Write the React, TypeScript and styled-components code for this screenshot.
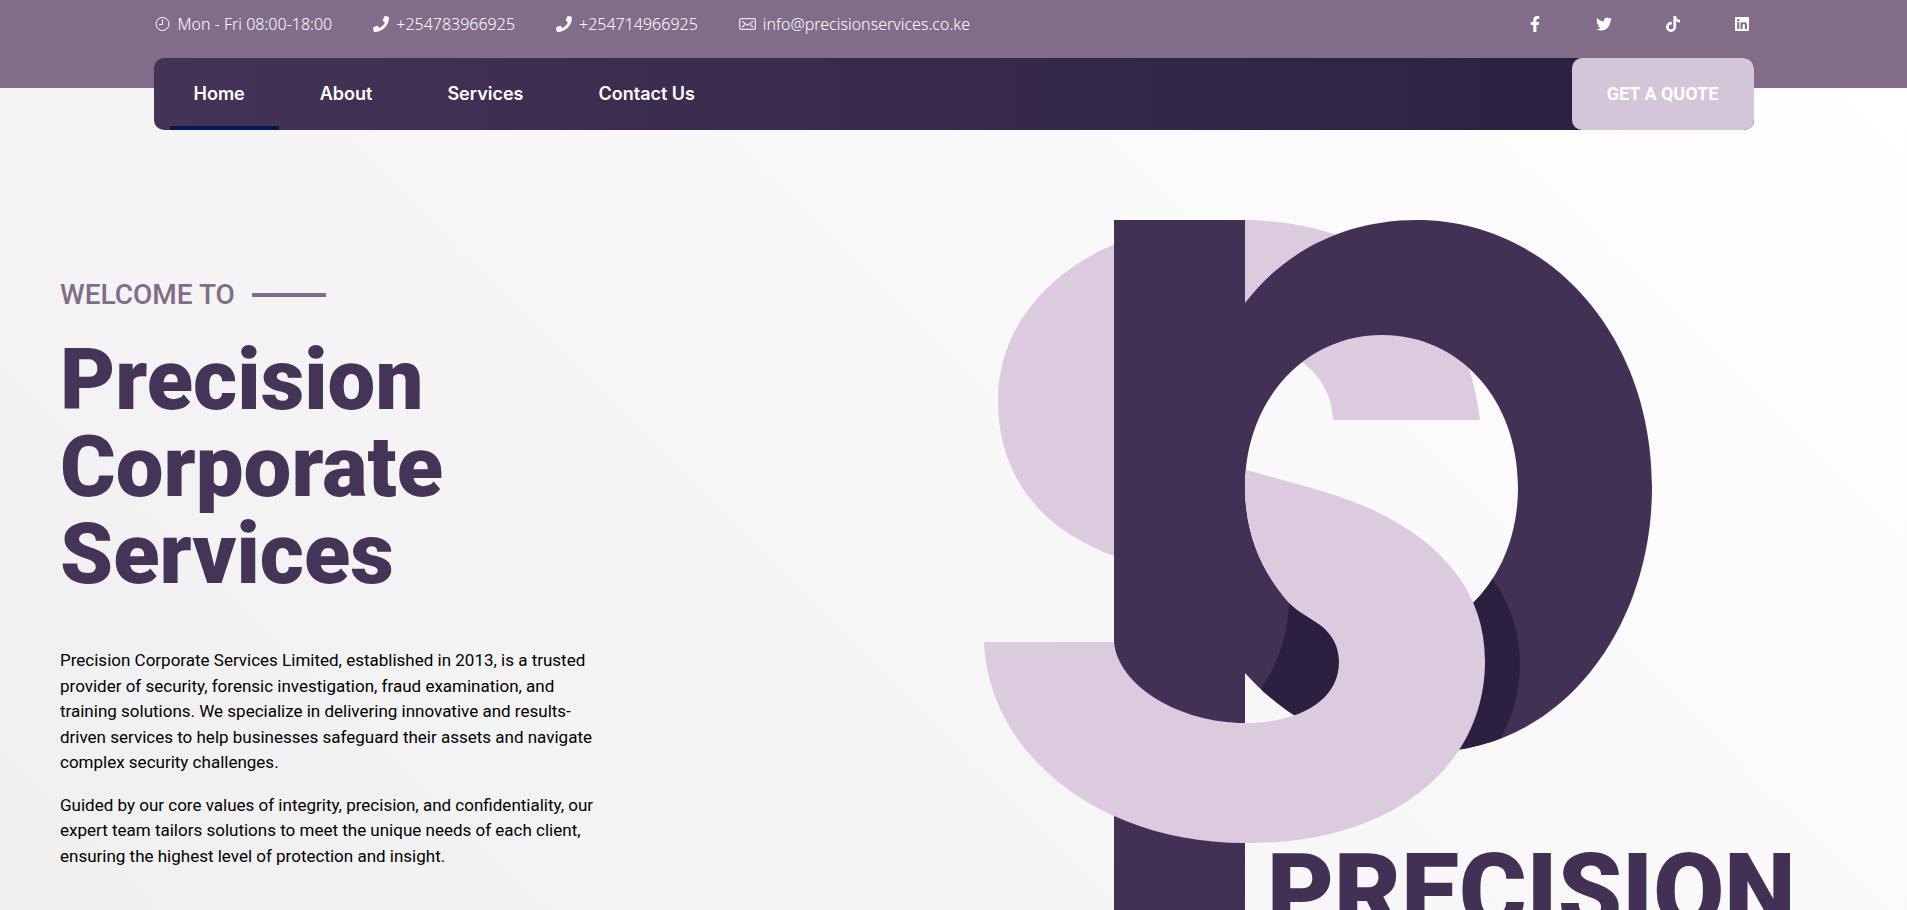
import React from "react";
import styled, { createGlobalStyle } from "styled-components";
import { FaFacebookF, FaLinkedin, FaPhone, FaTiktok, FaTwitter } from "react-icons/fa";

const color = {
  mauve: "#816d89",
  plum: "#433458",
  plumDark: "#2c2240",
  lilac: "#d5c5d8",
  markDark: "#423154",
  markShade: "#2c2040",
  markLight: "#dccadf",
  active: "#00185c",
};

const GlobalStyle = createGlobalStyle`
  *, *::before, *::after { box-sizing: border-box; }
  body {
    margin: 0;
    font-family: Roboto, "Liberation Sans", sans-serif;
    color: #000;
  }
  a { color: inherit; text-decoration: none; }
  h1, h2, p, ul { margin: 0; padding: 0; }
  ul { list-style: none; }
`;

const Page = styled.div`
  display: flex;
  flex-direction: column;
  min-height: 100vh;
`;

const Header = styled.header`
  position: relative;
  z-index: 1;
  height: 88px;
  background: ${color.mauve};
`;

const Container = styled.div`
  max-width: 1600px;
  margin: 0 auto;
`;

const TopRow = styled.div`
  display: flex;
  align-items: center;
  justify-content: space-between;
  height: 58px;
  padding: 0 4px 10px 0;
  color: #fff;
`;

const ContactList = styled.ul`
  display: flex;
  gap: 41px;
`;

const ContactItem = styled.li`
  display: flex;
  align-items: center;
  gap: 7px;
  font: 300 16px/24px "Noto Sans", sans-serif;
`;

const SocialList = styled.ul`
  display: flex;
  gap: 53px;
`;

const SocialLink = styled.a`
  display: flex;
  font-size: 16px;
`;

const NavBar = styled.nav`
  display: flex;
  justify-content: space-between;
  height: 72px;
  border-radius: 10px;
  overflow: hidden;
  background: linear-gradient(90deg, #443357, ${color.plumDark} 90%);
`;

const NavList = styled.ul`
  display: flex;
  gap: 17px;
  padding-left: 16px;
`;

const NavLink = styled.a<{ $active?: boolean }>`
  display: block;
  height: 72px;
  padding: 0 34px 0 24px;
  border-bottom: 4px solid ${(p) => (p.$active ? color.active : "transparent")};
  font: 600 18px/72px Inter, sans-serif;
  color: #fff;
`;

const QuoteButton = styled.button`
  width: 182px;
  border: 0;
  border-radius: 10px;
  background: ${color.lilac};
  color: #fff;
  font: 700 18px/24px Roboto, sans-serif;
  cursor: pointer;
`;

const Hero = styled.main`
  flex: 1;
  display: flex;
  justify-content: space-between;
  gap: 60px;
  padding: 0 117px 0 60px;
  background: linear-gradient(45deg, #efefef, #ffffff);
`;

const Intro = styled.section`
  flex: 0 1 545px;
  padding: 189px 0 40px;
`;

const Eyebrow = styled.h2`
  display: flex;
  align-items: center;
  gap: 17px;
  margin-bottom: 24px;
  font-size: 28px;
  font-weight: 500;
  line-height: 36px;
  color: ${color.mauve};

  &::after {
    content: "";
    width: 74px;
    height: 4px;
    background: ${color.mauve};
  }
`;

const Title = styled.h1`
  max-width: 420px;
  margin-bottom: 50px;
  font-size: 85px;
  font-weight: 900;
  line-height: 87px;
  color: ${color.plum};
`;

const Paragraph = styled.p`
  font-size: 17px;
  line-height: 1.5;

  & + & {
    margin-top: 17px;
  }
`;

const LogoColumn = styled.div`
  flex: 0 1 806px;
  padding-top: 132px;
`;

const LogoArt = styled.svg`
  display: block;
  width: 100%;
`;

const Wordmark = styled.text`
  font-family: Roboto, sans-serif;
  font-size: 103px;
  font-weight: 900;
  fill: ${color.markDark};
`;

const ClockIcon = () => (
  <svg width="17" height="16" viewBox="0 0 17 16" fill="none" stroke="#fff" aria-hidden="true">
    <circle cx="8.5" cy="8" r="6.5" />
    <path d="M8.5 3.5V8.5H5" />
  </svg>
);

const MailIcon = () => (
  <svg width="17" height="12" viewBox="0 0 17 12" fill="none" stroke="#eee3f0" strokeWidth="1.3" aria-hidden="true">
    <rect x="0.7" y="0.7" width="15.6" height="10.6" rx="1.4" />
    <path d="M3 3.2L8.5 7.2L14 3.2M3 9.2L5.8 6.6M14 9.2L11.2 6.6" />
  </svg>
);

const BOWL =
  "M1240 303H1245C1285 251 1345 220 1417 220C1547 220 1652 333 1652 487C1652 630 1560 752 1428 752C1355 752 1295 728 1245 673H1240Z" +
  "M1245 487C1245 575 1305 640 1382 640C1460 640 1518 575 1518 487C1518 400 1460 335 1382 335C1305 335 1245 400 1245 487Z";

const Logo = () => (
  <LogoArt viewBox="984 220 806 690" role="img" aria-label="Precision Corporate Services logo">
    <defs>
      <clipPath id="bowl">
        <path d={BOWL} clipRule="evenodd" />
      </clipPath>
    </defs>
    <path
      fill={color.markLight}
      d="M1240 220C1370 220 1465 290 1480 420H1333C1332 395 1320 375 1302 362L1290 350H1200V556H1114C1045 531 998 480 998 400C998 296 1102 220 1240 220Z"
    />
    <rect x="1114" y="220" width="131" height="700" fill={color.markDark} />
    <path fill={color.markDark} fillRule="evenodd" d={BOWL} />
    <g clipPath="url(#bowl)" fill={color.markShade}>
      <path d="M1289 590C1290 625 1282 658 1261 689L1270 760H1400V590Z" />
      <path d="M1493 580C1528 628 1527 690 1501 738L1490 770H1400V560H1480Z" />
    </g>
    <path
      fill={color.markLight}
      d="M1246 470C1290 482 1337 493 1373 510C1445 544 1485 594 1485 661C1485 768 1390 843 1250 843H1245C1100 843 989 755 984 642H1114C1118 686 1180 723 1245 723C1300 723 1339 700 1339 662C1339 643 1329 630 1313 620C1303 614 1296 610 1288 602C1260 569 1245 531 1245 487Z"
    />
    <Wordmark x="1267" y="927">PRECISION</Wordmark>
  </LogoArt>
);

const socials = [
  { name: "Facebook", Icon: FaFacebookF },
  { name: "Twitter", Icon: FaTwitter },
  { name: "TikTok", Icon: FaTiktok },
  { name: "LinkedIn", Icon: FaLinkedin },
];

const pages = ["Home", "About", "Services", "Contact Us"];

export default function App() {
  return (
    <Page>
      <GlobalStyle />
      <Header>
        <Container>
          <TopRow>
            <ContactList>
              <ContactItem>
                <ClockIcon />
                Mon - Fri 08:00-18:00
              </ContactItem>
              <ContactItem>
                <FaPhone />
                <a href="tel:+254783966925">+254783966925</a>
              </ContactItem>
              <ContactItem>
                <FaPhone />
                <a href="tel:+254714966925">+254714966925</a>
              </ContactItem>
              <ContactItem>
                <MailIcon />
                <a href="mailto:info@precisionservices.co.ke">info@precisionservices.co.ke</a>
              </ContactItem>
            </ContactList>
            <SocialList>
              {socials.map(({ name, Icon }) => (
                <li key={name}>
                  <SocialLink href="#" aria-label={name}>
                    <Icon />
                  </SocialLink>
                </li>
              ))}
            </SocialList>
          </TopRow>
          <NavBar>
            <NavList>
              {pages.map((page, i) => (
                <li key={page}>
                  <NavLink href="#" $active={i === 0}>
                    {page}
                  </NavLink>
                </li>
              ))}
            </NavList>
            <QuoteButton type="button">GET A QUOTE</QuoteButton>
          </NavBar>
        </Container>
      </Header>
      <Hero>
        <Intro>
          <Eyebrow>WELCOME TO</Eyebrow>
          <Title>Precision Corporate Services</Title>
          <Paragraph>
            Precision Corporate Services Limited, established in 2013, is a trusted provider of security, forensic
            investigation, fraud examination, and training solutions. We specialize in delivering innovative and
            results-driven services to help businesses safeguard their assets and navigate complex security challenges.
          </Paragraph>
          <Paragraph>
            Guided by our core values of integrity, precision, and confidentiality, our expert team tailors solutions to
            meet the unique needs of each client, ensuring the highest level of protection and insight.
          </Paragraph>
        </Intro>
        <LogoColumn>
          <Logo />
        </LogoColumn>
      </Hero>
    </Page>
  );
}
